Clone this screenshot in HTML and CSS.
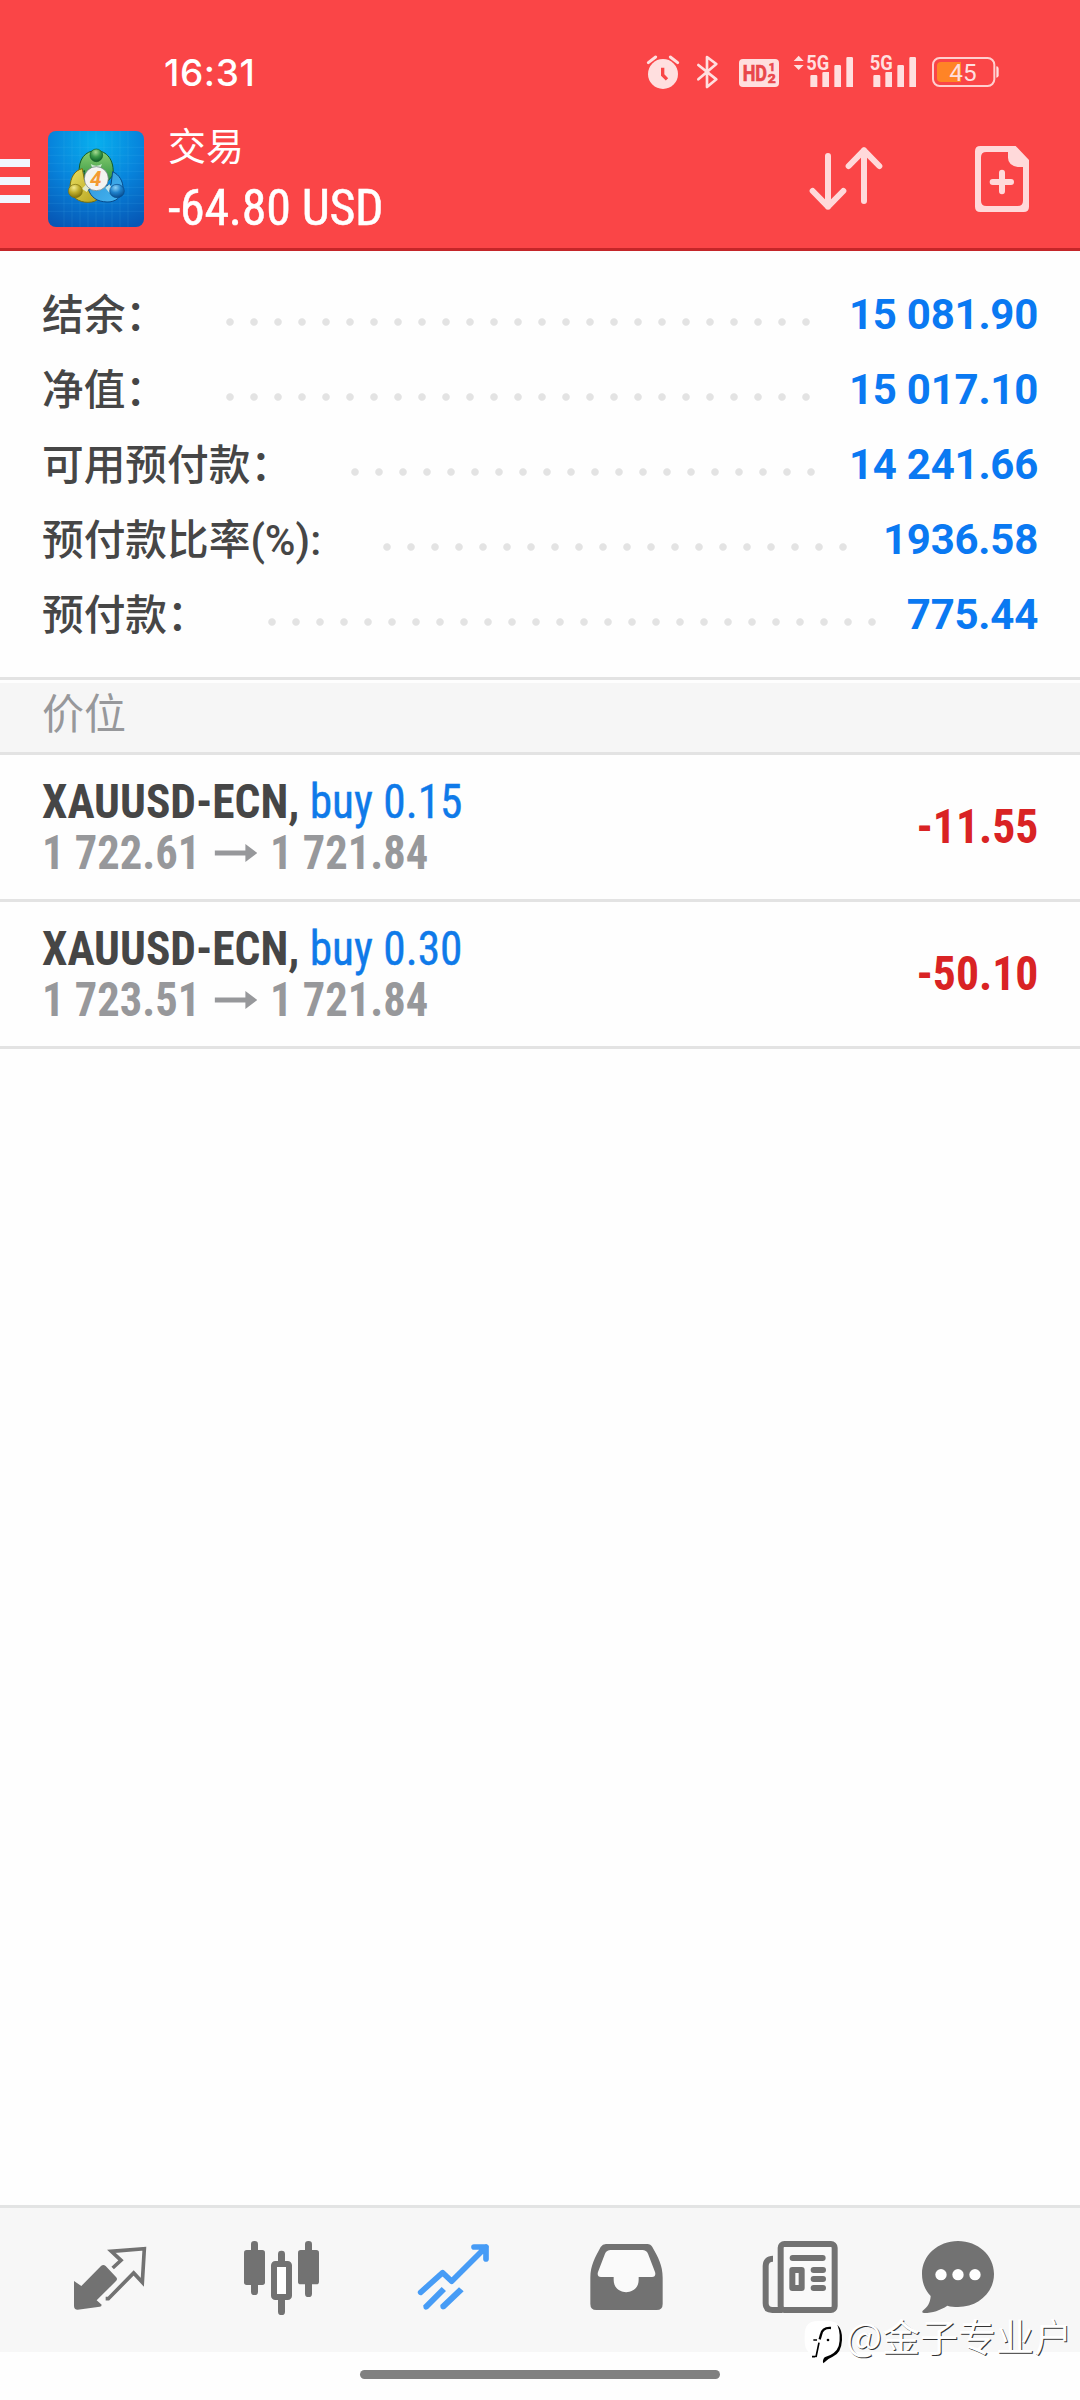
FILE: index.html
```html
<!DOCTYPE html>
<html lang="zh-CN">
<head>
<meta charset="utf-8">
<title>交易</title>
<link rel="stylesheet" href="styles.css">
</head>
<body>
<header class="header">
  <div class="status">
    <span class="clock">16:31</span>
    <svg class="status-icons" viewBox="75 60 1065 120" fill="#ffdfdf">
      <g>
        <circle cx="129" cy="132" r="45"/>
        <path d="M85 98l22-17M151 81l22 17" stroke="#ffdfdf" stroke-width="9" stroke-linecap="round"/>
        <path d="M128 113v22l13 13" fill="none" stroke="#f94545" stroke-width="10"/>
      </g>
      <path d="M235 105l54 43-28 23V81l28 21-54 46" fill="none" stroke="#ffdfdf" stroke-width="8" stroke-linejoin="round" stroke-linecap="round"/>
      <rect x="357" y="87" width="120" height="84" rx="12"/>
      <g fill="#e9474a" stroke="#e9474a" stroke-width="2" font-weight="700">
        <text x="368" y="153" font-size="65" textLength="73" lengthAdjust="spacingAndGlyphs">HD</text>
        <text x="446" y="124" font-size="34">1</text>
        <text x="443" y="160" font-size="38" textLength="24" lengthAdjust="spacingAndGlyphs">2</text>
      </g>
      <path d="M536 77l15 16h-30zM536 120l15-15h-30z"/>
      <g font-size="62" font-weight="700">
        <text x="559" y="121" textLength="69" lengthAdjust="spacingAndGlyphs">5G</text>
        <text x="749" y="121" textLength="69" lengthAdjust="spacingAndGlyphs">5G</text>
      </g>
      <path id="bars" d="M571 139q0-4 4-4h13q4 0 4 4v32h-21zM607 129q0-3 4-3h16v45h-20zM643 109q0-4 4-4h12q4 0 4 4v62h-20zM679 85q0-4 4-4h12q4 0 4 4v86h-20z"/>
      <use href="#bars" x="189"/>
      <rect x="939" y="84" width="184" height="84" rx="20" fill="none" stroke="#ffcfcf" stroke-width="6"/>
      <path d="M1129 109q7 0 7 7v20q0 7-7 7z"/>
      <path d="M963 96h60v60h-60q-12 0-12-12v-36q0-12 12-12z" fill="#ff8426"/>
      <text x="988" y="153" font-size="72" textLength="82" lengthAdjust="spacingAndGlyphs">45</text>
    </svg>
  </div>
  <div class="toolbar">
    <svg class="menu" viewBox="0 0 30 96" fill="#f1f5ff"><path d="M0 28h30v8H0zM0 46h30v8H0zM0 64h30v8H0z"/></svg>
    <svg class="logo" viewBox="144 303 288 288">
      <defs>
        <radialGradient id="bg" cx=".5" cy=".12" r=".95"><stop offset="0" stop-color="#08b0ee"/><stop offset=".5" stop-color="#0784dc"/><stop offset="1" stop-color="#0757b5"/></radialGradient>
        <linearGradient id="gr" x2="0" y2="1"><stop offset="0" stop-color="#8cd071"/><stop offset="1" stop-color="#2a8f3f"/></linearGradient>
        <linearGradient id="ye" x2="1" y2="1"><stop offset="0" stop-color="#e9df61"/><stop offset="1" stop-color="#b5a11b"/></linearGradient>
        <linearGradient id="bl" x2="1" y2="1"><stop offset="0" stop-color="#2f94d8"/><stop offset="1" stop-color="#45b5f2"/></linearGradient>
        <radialGradient id="gb" cx=".45" cy=".25" r=".75"><stop offset="0" stop-color="#a8dc92"/><stop offset=".5" stop-color="#3c9a48"/><stop offset="1" stop-color="#0f5f27"/></radialGradient>
        <radialGradient id="yb" cx=".4" cy=".25" r=".75"><stop offset="0" stop-color="#f3ec8f"/><stop offset=".5" stop-color="#bfae2b"/><stop offset="1" stop-color="#81720b"/></radialGradient>
        <radialGradient id="bb" cx=".4" cy=".25" r=".75"><stop offset="0" stop-color="#8bd1f7"/><stop offset=".5" stop-color="#1f82cc"/><stop offset="1" stop-color="#084d91"/></radialGradient>
      </defs>
      <rect x="144" y="303" width="288" height="288" rx="24" fill="url(#bg)"/>
      <path d="M192 303v288M216 303v288M240 303v288M264 303v288M288 303v288M312 303v288M336 303v288M360 303v288M384 303v288M144 352h288M144 376h288M144 400h288M144 424h288M144 448h288M144 472h288M144 496h288M144 520h288M144 544h288" stroke="#66c8f5" stroke-opacity=".18" stroke-width="2"/>
      <g stroke-linejoin="round" stroke-width="3">
        <path d="M238 430c-4-42 18-68 50-68s56 28 51 74l-20 22h-55c-10-10-14-20-10-36z" fill="url(#gr)" stroke="#145d25"/>
        <path d="M247 416c-24 5-36 28-37 56 2 30 26 45 54 45 16 0 26-5 34-13l-8-30-36-20z" fill="url(#ye)" stroke="#7b6f0c"/>
        <path d="M338 425c21 10 31 29 31 50-2 26-23 42-48 41-30-1-48-14-56-38l20-4 48-10z" fill="url(#bl)" stroke="#074a8b"/>
        <path d="M272 402q17 10 34 0l-6 14h-22zM246 476l14-14 10 10-10 14zM316 474l12-12 8 14-8 12z" fill="#e8f6ee" fill-opacity=".8"/>
        <circle cx="289" cy="376" r="19" fill="url(#gb)" stroke="#145d25" stroke-width="2"/>
        <ellipse cx="226" cy="483" rx="21" ry="20" fill="url(#yb)" stroke="#7b6f0c" stroke-width="2"/>
        <ellipse cx="351" cy="483" rx="22" ry="20" fill="url(#bb)" stroke="#074a8b" stroke-width="2"/>
      </g>
      <circle cx="289" cy="446" r="36" fill="#f3f3f1" stroke="#66757a" stroke-width="2"/>
      <text x="287" y="467" text-anchor="middle" font-size="62" font-weight="700" font-style="italic" fill="#f49a31">4</text>
    </svg>
    <div class="title">
      <div class="title-name">交易</div>
      <div class="title-sum"><span class="cond">-64.80 USD</span></div>
    </div>
    <svg class="sort" viewBox="564 345 230 201" fill="none" stroke="#ffd9da" stroke-width="18" stroke-linecap="round" stroke-linejoin="round">
      <path d="M624 378v152M578 483l46 47 46-47M732 513V361M686 408l46-47 46 47"/>
    </svg>
    <svg class="new-order" viewBox="1062 345 168 204">
      <path fill="#ffd9da" fill-rule="evenodd" d="M1081 348h106l40 42v140q0 16-16 16h-130q-16 0-16-16V364q0-16 16-16zM1099 366q-16 0-16 16v130q0 16 16 16h94q16 0 16-16V411h-16q-29-6-29-28v-17z"/>
      <path d="M1118 456h55M1146 428v56" stroke="#ffd9da" stroke-width="18" stroke-linecap="round"/>
    </svg>
  </div>
</header>

<section class="summary">
  <div class="sum-row"><span class="sum-label">结余：</span><span class="dots"></span><span class="sum-value">15 081.90</span></div>
  <div class="sum-row"><span class="sum-label">净值：</span><span class="dots"></span><span class="sum-value">15 017.10</span></div>
  <div class="sum-row"><span class="sum-label">可用预付款：</span><span class="dots"></span><span class="sum-value">14 241.66</span></div>
  <div class="sum-row"><span class="sum-label sum-label-rate">预付款比率(%):</span><span class="dots"></span><span class="sum-value">1936.58</span></div>
  <div class="sum-row"><span class="sum-label">预付款：</span><span class="dots"></span><span class="sum-value">775.44</span></div>
</section>

<h2 class="section-title">价位</h2>

<main class="positions">
  <div class="position">
    <div class="pos-info">
      <div class="pos-line"><span class="cond"><b>XAUUSD-ECN,</b> <span class="side">buy 0.15</span></span></div>
      <div class="pos-line prices"><span class="cond">1 722.61</span><svg class="arrow" viewBox="0 0 43 18" preserveAspectRatio="none"><path d="M0 6.500h31V0l12 9-12 9v-6.500H0z"/></svg><span class="cond">1 721.84</span></div>
    </div>
    <div class="profit"><span class="cond">-11.55</span></div>
  </div>
  <div class="position">
    <div class="pos-info">
      <div class="pos-line"><span class="cond"><b>XAUUSD-ECN,</b> <span class="side">buy 0.30</span></span></div>
      <div class="pos-line prices"><span class="cond">1 723.51</span><svg class="arrow" viewBox="0 0 43 18" preserveAspectRatio="none"><path d="M0 6.500h31V0l12 9-12 9v-6.500H0z"/></svg><span class="cond">1 721.84</span></div>
    </div>
    <div class="profit"><span class="cond">-50.10</span></div>
  </div>
</main>

<nav class="tabs">
  <svg class="tab" viewBox="72 54 516 432">
    <path d="M222 273l22 15 59-60q7-6 14 0l31 33q6 6 0 12l-58 58 15 13q0 6-6 6l-66 9q-11 0-11-11z"/>
    <path d="M338 234l25-23-29-27 99-8-6 101-26-28-76 77h-8" fill="none" stroke="#727272" stroke-width="11"/>
  </svg>
  <svg class="tab" viewBox="588 54 516 432">
    <rect x="732" y="180" width="63" height="105" rx="8"/><rect x="753" y="153" width="21" height="162" rx="10"/>
    <rect x="894" y="180" width="63" height="103" rx="8"/><rect x="915" y="153" width="21" height="168" rx="10"/>
    <rect x="834" y="182" width="21" height="50" rx="10"/><rect x="834" y="310" width="21" height="65" rx="10"/>
    <rect x="822" y="222" width="45" height="99" rx="4" fill="#fff" stroke="#727272" stroke-width="18"/>
  </svg>
  <svg class="tab" viewBox="24 54 516 432">
    <g fill="none" stroke="#479cf6" stroke-width="17" stroke-linecap="round" stroke-linejoin="round">
      <path d="M182 307l66-59 27 26L378 171M342 171h36v36"/>
    </g>
    <path d="M362 171h16v16z" fill="#479cf6" stroke="#479cf6" stroke-width="10"/>
    <path d="M191 345l54-54 13 12-54 54q-15 7-14-12zM241 345l56-53 14 12-56 53q-15 5-14-12z" fill="#479cf6"/>
  </svg>
  <svg class="tab" viewBox="540 54 516 432">
    <path d="M738 162h124q10 0 15 9c17 30 31 55 31 92v79q0 18-18 18H709q-18 0-18-18v-79c0-37 15-62 31-92q6-9 16-9z"/>
    <path d="M752 180h95q12 0 17 11l21 55q4 15-9 15h-40v8c0 50-75 50-75 0v-8h-38q-13 0-9-15l21-55q5-11 17-11z" fill="#fafafa"/>
  </svg>
  <svg class="tab" viewBox="-24 54 516 432">
    <path d="M159 206c-14 0-22 8-22 22v112q0 20 20 20h30" fill="none" stroke="#727272" stroke-width="18"/>
    <rect x="182" y="162" width="162" height="198" rx="11" fill="#f9f9f9" stroke="#727272" stroke-width="18"/>
    <path d="M218 204h90M281 240h28M281 267h28M281 294h28" stroke="#727272" stroke-width="18" stroke-linecap="round"/>
    <rect x="217" y="240" width="28" height="54" fill="none" stroke="#727272" stroke-width="18" stroke-linejoin="round"/>
  </svg>
  <svg class="tab" viewBox="492 54 516 432">
    <path d="M714 153c60 0 108 43 108 99s-48 99-108 99c-11 0-22-1-32-4-21 14-45 22-69 22q-9 0-5-7c15-10 23-25 24-44-17-18-26-40-26-66 0-56 48-99 108-99z"/>
    <g fill="#fff"><circle cx="663" cy="254" r="17"/><circle cx="714" cy="254" r="17"/><circle cx="765" cy="254" r="17"/></g>
  </svg>
</nav>
<footer class="gesture"><div class="gesture-pill"></div></footer>

<div class="watermark">
  <svg class="wm-logo" viewBox="18 24 132 144">
    <path d="M66 33h30q40 0 40 44v16q0 38-34 48l-22 14-4-16q-50 0-50-46V73q0-40 40-40z" fill="#fff"/>
    <path d="M124 44q16 16 14 46-2 40-28 50-16 6-28 20-4-8 4-18 34-10 42-34 8-34-4-64z"/>
    <path d="M105 54q-26-2-30 20l-4 14" fill="none" stroke="#000" stroke-width="7"/>
    <path d="M52 90h11M69 98l-9 43M48 140h10" fill="none" stroke="#000" stroke-width="5"/>
    <circle cx="96" cy="90" r="4"/>
  </svg>
  <span class="wm-text">@金子专业户</span>
</div>
</body>
</html>
```
FILE: styles.css
```css
* { box-sizing: border-box; }
body {
  margin: 0;
  width: 1080px;
  height: 2400px;
  display: flex;
  flex-direction: column;
  position: relative;
  background: #fefefe;
  color: #464646;
  font-family: Roboto, "Noto Sans CJK SC", sans-serif;
}
svg { display: block; flex: none; }
.cond {
  display: inline-block;
  font-family: "Roboto Condensed", Roboto, sans-serif;
  font-stretch: 75%;
  white-space: pre;
}

.header { height: 251px; background: #fa4547; border-bottom: 3px solid #c42629; color: #fff; }
.status { height: 131px; padding: 50px 80px 0 164px; display: flex; justify-content: space-between; align-items: flex-start; }
.clock { font: 500 37px/45px Inter, sans-serif; letter-spacing: 0.6px; }
.status-icons { width: 355px; height: 40px; }
.toolbar { display: flex; height: 96px; }
.menu { width: 30px; height: 96px; margin-right: 18px; }
.logo { width: 96px; height: 96px; margin-right: 24px; }
.title { flex: 1; }
.title-name { font-size: 38px; line-height: 44px; margin-top: -6px; }
.title-sum { font-size: 50px; line-height: 60px; margin-top: 9px; letter-spacing: -0.3px; -webkit-text-stroke: 0.5px #fff; }
.sort { width: 76.670px; height: 67px; margin: 14px 89px 0 0; }
.new-order { width: 56px; height: 68px; margin: 14px 50px 0 0; }

.summary { height: 429px; padding: 26px 42px 0; border-bottom: 3px solid #e3e3e3; }
.sum-row { display: flex; height: 75px; align-items: center; font-size: 42px; }
.sum-label { font-size: 41.700px; font-weight: 500; padding-bottom: 5px; }
.sum-label-rate { padding-right: 3px; }
.sum-value { font-weight: 700; letter-spacing: -0.250px; color: #0a79f2; }
.dots {
  flex: 1;
  height: 8px;
  margin: 14px 25px 0 51px;
  background: radial-gradient(circle at 12px 4px, #e3e3e3 3.300px, transparent 4.200px) 0 0 / 24px 8px repeat-x;
}

.section-title {
  margin: 3px 0 0;
  height: 72px;
  padding-left: 42px;
  background: #f6f6f6;
  border-bottom: 3px solid #e3e3e3;
  font-size: 42px;
  font-weight: 400;
  line-height: 63px;
  color: #97989b;
}

.position { height: 147px; padding: 0 42px; border-bottom: 3px solid #e3e3e3; display: flex; justify-content: space-between; align-items: center; font-size: 48px; }
.pos-line { line-height: 51px; display: flex; align-items: center; transform: scaleX(0.945); transform-origin: 0 50%; }
.side { color: #0f7ae9; -webkit-text-stroke: 0.4px #0f7ae9; }
.prices { font-weight: 700; color: #97989b; transform: scaleX(0.928); }
.arrow { width: 46px; height: 18px; margin: 0 14px 0 15px; fill: #97989b; }
.profit { font-weight: 700; color: #d92324; padding-bottom: 2px; transform: scaleX(0.95); transform-origin: 100% 50%; }

.tabs { margin-top: auto; height: 147px; padding: 0 24px; display: flex; background: #f7f7f7; border-top: 3px solid #e3e4e4; fill: #727272; }
.tab { width: 172px; height: 144px; }
.gesture { height: 48px; padding-top: 18px; }
.gesture-pill { width: 360px; height: 9px; margin: 0 auto; border-radius: 5px; background: #808080; }

.watermark { position: absolute; left: 802px; top: 2313px; display: flex; align-items: flex-start; }
.wm-logo { width: 44px; height: 48px; margin-top: 5px; }
.wm-text { font: 400 38px/44px "Noto Sans CJK SC", sans-serif; color: #fff; text-shadow: 1px 1px 0 #333; white-space: nowrap; }
```
